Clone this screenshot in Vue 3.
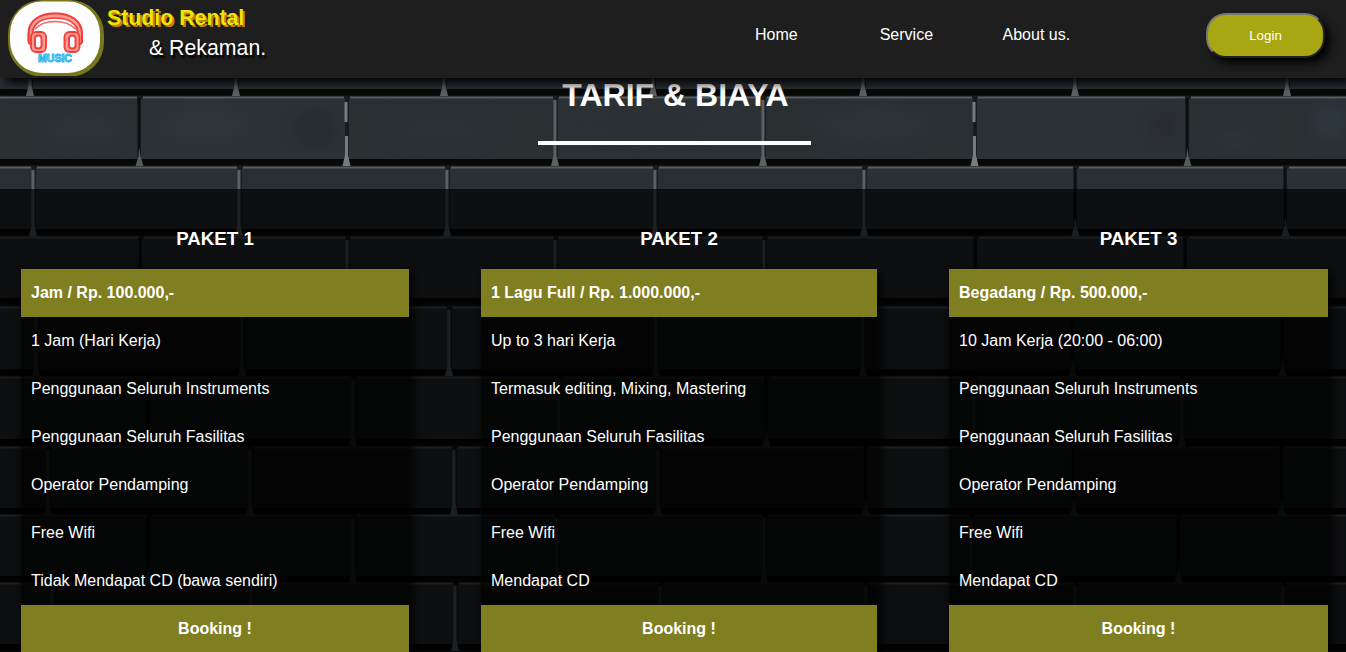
<script setup>
const links = ['Home', 'Service', 'About us.']

const packages = [
  { name: 'PAKET 1', price: 'Jam / Rp. 100.000,-', items: ['1 Jam (Hari Kerja)', 'Penggunaan Seluruh Instruments', 'Penggunaan Seluruh Fasilitas', 'Operator Pendamping', 'Free Wifi', 'Tidak Mendapat CD (bawa sendiri)'] },
  { name: 'PAKET 2', price: '1 Lagu Full / Rp. 1.000.000,-', items: ['Up to 3 hari Kerja', 'Termasuk editing, Mixing, Mastering', 'Penggunaan Seluruh Fasilitas', 'Operator Pendamping', 'Free Wifi', 'Mendapat CD'] },
  { name: 'PAKET 3', price: 'Begadang / Rp. 500.000,-', items: ['10 Jam Kerja (20:00 - 06:00)', 'Penggunaan Seluruh Instruments', 'Penggunaan Seluruh Fasilitas', 'Operator Pendamping', 'Free Wifi', 'Mendapat CD'] }
]

// Brick courses: top edge, bottom edge, and vertical joints as [x, style].
// Styles: 'f' full light joint, 'b' broken light joint, 'd' dark joint lit only at its foot.
const courses = [
  { top: 30, bottom: 90, joints: [[30, 'f'], [236, 'f'], [444, 'f'], [653, 'f'], [863, 'f'], [1075, 'f'], [1287, 'f']] },
  { top: 98, bottom: 160, joints: [[139, 'd'], [346, 'b'], [555, 'f'], [763, 'f'], [974, 'b'], [1187, 'd']] },
  { top: 168, bottom: 230, joints: [[33, 'f'], [239, 'f'], [447, 'f'], [655, 'f'], [864, 'f'], [1075, 'd'], [1285, 'd']] },
  { top: 238, bottom: 299, joints: [[140, 'd'], [347, 'f'], [555, 'f'], [764, 'f'], [975, 'd'], [1185, 'd']] },
  { top: 308, bottom: 370, joints: [[36, 'f'], [242, 'f'], [449, 'f'], [656, 'f'], [863, 'f'], [1072, 'd'], [1282, 'd']] },
  { top: 378, bottom: 440, joints: [[148, 'd'], [353, 'f'], [559, 'f'], [766, 'd'], [974, 'f'], [1182, 'f']] },
  { top: 448, bottom: 509, joints: [[48, 'f'], [250, 'f'], [454, 'f'], [658, 'f'], [865, 'd'], [1073, 'd'], [1281, 'd']] },
  { top: 516, bottom: 577, joints: [[148, 'd'], [353, 'f'], [557, 'f'], [764, 'f'], [971, 'f'], [1178, 'd']] },
  { top: 584, bottom: 645, joints: [[52, 'f'], [251, 'f'], [455, 'f'], [660, 'f'], [866, 'f'], [1075, 'f'], [1283, 'f']] }
]
const fills = ['#2b3034', '#2c3135', '#292e32', '#2a2f32']
const bricks = courses.flatMap((c, r) => {
  const xs = [-60, ...c.joints.map(j => j[0]), 1400]
  return xs.slice(0, -1).map((x, i) => ({
    x: x + 2, y: c.top, w: xs[i + 1] - x - 3, h: c.bottom - c.top,
    fill: fills[(i * 2 + r * 3) % fills.length],
    key: r + '-' + i
  }))
})
const joints = courses.flatMap((c, r) =>
  c.joints.map(([x, kind], i) => ({ x, kind, top: c.top, bottom: c.bottom + 7, key: r + '-' + i }))
)
</script>

<template>
  <div class="page">
    <svg class="wall" width="1346" height="652" viewBox="0 0 1346 652" aria-hidden="true">
      <defs>
        <filter id="soft" x="-5%" y="-5%" width="110%" height="110%" color-interpolation-filters="sRGB"><feGaussianBlur stdDeviation="0.6" /></filter>
        <filter id="smudge" x="-50%" y="-50%" width="200%" height="200%" color-interpolation-filters="sRGB"><feGaussianBlur stdDeviation="8" /></filter>
      </defs>
      <rect width="1346" height="652" fill="#1a1d1f" />
      <g filter="url(#soft)">
        <rect v-for="b in bricks" :key="b.key" :x="b.x" :y="b.y" :width="b.w" :height="b.h" rx="2" :fill="b.fill" />
      </g>
      <g filter="url(#smudge)" opacity=".7">
        <ellipse cx="85" cy="130" rx="40" ry="16" fill="#30353b" />
        <ellipse cx="205" cy="125" rx="45" ry="17" fill="#31363b" />
        <ellipse cx="315" cy="130" rx="20" ry="20" fill="#212c30" />
        <ellipse cx="440" cy="128" rx="55" ry="17" fill="#2d3236" />
        <ellipse cx="650" cy="124" rx="65" ry="15" fill="#2a3135" />
        <ellipse cx="875" cy="125" rx="60" ry="17" fill="#303539" />
        <ellipse cx="1166" cy="125" rx="12" ry="18" fill="#27272b" />
        <ellipse cx="1235" cy="140" rx="28" ry="8" fill="#2c3642" />
        <ellipse cx="1330" cy="122" rx="20" ry="20" fill="#2e3844" />
      </g>
      <g filter="url(#soft)">
        <template v-for="b in bricks" :key="b.key">
          <rect :x="b.x + 2" :y="b.y - 1.500" :width="b.w - 3" height="2" fill="#565d61" />
          <rect :x="b.x" :y="b.y + b.h - 1" :width="b.w" height="6.500" fill="#080907" />
        </template>
        <template v-for="j in joints" :key="j.key">
          <path v-if="j.kind === 'd'" :d="`M${j.x} ${j.top}V${j.bottom - 5}`" stroke="#0c0e0f" stroke-width="3" />
          <path v-else :d="`M${j.x + 2} ${j.top}V${j.bottom - 5}`" stroke="#15181a" stroke-width="1.500" />
          <path v-if="j.kind === 'f'" :d="`M${j.x - 1.500} ${j.top + 2}h3V${j.bottom - 12}l2.500 11h-8l2.500-11z`" fill="#5a6165" />
          <path v-else-if="j.kind === 'b'" :d="`M${j.x - 1.500} ${j.top + 4}h3v20h-3zM${j.x - 1} ${j.top + 38}h3V${j.bottom - 12}l2.500 11h-8l2.500-11z`" fill="#747c82" />
          <path v-else :d="`M${j.x} ${j.bottom - 20}l1.500 9 3 10h-8l3-10z`" fill="#555c60" />
        </template>
      </g>
    </svg>

    <header class="bar">
      <svg class="logo" viewBox="0 0 96 76" aria-label="Music">
        <rect x="0" y="0" width="96" height="76.500" rx="34" fill="#77771b" />
        <rect x="2" y="1.500" width="90" height="71.500" rx="32" fill="#fff" />
        <g fill="none" stroke-linecap="round" stroke-linejoin="round">
          <path d="M22.500 39V34C22.500 22 33 15.500 47 15.500S72 22 72 34V39" stroke="#ff9d94" stroke-width="6" />
          <path d="M20.500 41V34C20.500 20 32 13.500 47 13.500S74 20 74 34V41" stroke="#f53c3a" stroke-width="2" />
          <path d="M24.500 32C26 23 34 18 47 18S68.500 23 70 32" stroke="#f53c3a" stroke-width="1.700" />
          <path d="M27 29Q34 21.500 47 21.500T67.500 29" stroke="#f8655f" stroke-width="1.300" />
          <g stroke="#ff9d94" stroke-width="4">
            <rect x="25" y="34" width="10.500" height="16" rx="4" /><rect x="58.500" y="34" width="10.500" height="16" rx="4" />
          </g>
          <g stroke="#f53c3a" stroke-width="1.900">
            <rect x="23" y="32" width="15" height="20" rx="5" /><rect x="56.500" y="32" width="15" height="20" rx="5" />
            <rect x="27" y="35.500" width="6.500" height="13" rx="3" /><rect x="61" y="35.500" width="6.500" height="13" rx="3" />
            <path d="M20.500 41Q20.500 44 23 44M74 41Q74 44 71.500 44" />
          </g>
        </g>
        <text x="47" y="62.200" text-anchor="middle" textLength="34" lengthAdjust="spacingAndGlyphs" class="logo-text">MUSIC</text>
      </svg>
      <div class="brand">
        <strong>Studio Rental</strong>
        <span>&amp; Rekaman.</span>
      </div>
      <nav class="nav">
        <a v-for="l in links" :key="l">{{ l }}</a>
      </nav>
      <button class="login">Login</button>
    </header>

    <section class="heading">
      <h1>TARIF &amp; BIAYA</h1>
      <div class="rule"></div>
    </section>

    <main class="packages">
      <article v-for="p in packages" :key="p.name">
        <h3>{{ p.name }}</h3>
        <div class="table">
          <div class="row gold">{{ p.price }}</div>
          <div v-for="item in p.items" :key="item" class="row">{{ item }}</div>
          <div class="row gold booking">Booking !</div>
        </div>
      </article>
    </main>
  </div>
</template>

<style>
body {
  margin: 0;
  background: #101112;
}
</style>

<style scoped>
.page {
  position: relative;
  width: 1346px;
  height: 652px;
  overflow: hidden;
  color: #fff;
  font: 16px/18px "Liberation Sans", Arial, sans-serif;
}
.wall {
  position: absolute;
  inset: 0;
}
.bar {
  position: relative;
  z-index: 2;
  display: flex;
  align-items: flex-start;
  box-sizing: border-box;
  height: 78px;
  padding-left: 8px;
  background: #1e1e1e;
  box-shadow: 5px 5px 10px #000;
}
.logo {
  flex: none;
  width: 96px;
  height: 76px;
}
.logo-text {
  font: bold 10px "Liberation Sans", Arial, sans-serif;
  fill: #a5e6fb;
  stroke: #27b1e8;
  stroke-width: 0.9px;
}
.brand {
  display: flex;
  flex-direction: column;
  width: 200px;
  margin-left: 3px;
  padding-top: 3px;
  font-size: 21.3px;
  line-height: 30px;
}
.brand strong {
  color: #eee600;
  text-shadow: 2px 2px 0 #c87f08;
}
.brand span {
  padding-left: 42px;
  text-shadow: 2px 3px 2px #000;
}
.nav {
  display: flex;
  gap: 82px;
  margin-left: 448px;
  padding-top: 26px;
}
.nav a:last-child {
  margin-left: -12.5px;
}
.login {
  box-sizing: border-box;
  width: 119px;
  height: 45px;
  margin: 13px 21px 0 auto;
  border: 2px outset #767676;
  border-radius: 20px;
  background: #a9a613;
  box-shadow: 5px 5px 10px #000;
  color: #fff;
  font: 13.333px "Liberation Sans", Arial, sans-serif;
}
.heading {
  position: relative;
  height: 111px;
  text-align: center;
}
.heading h1 {
  margin: 0;
  padding-left: 5px;
  font-size: 32px;
  line-height: 34px;
}
.rule {
  width: 273px;
  height: 4px;
  margin: 29px 0 0 538px;
  background: #fff;
}
.packages {
  position: relative;
  display: grid;
  grid-template-columns: 388px 396px 379px;
  column-gap: 72px;
  box-sizing: border-box;
  height: 463px;
  padding: 39px 18px 0 21px;
  background: rgba(0, 0, 0, 0.68);
}
h3 {
  margin: 0 0 19px;
  font-size: 18.72px;
  line-height: 22px;
  text-align: center;
}
.table {
  background: rgba(0, 0, 0, 0.65);
  box-shadow: 3px 3px 10px #000;
}
.row {
  box-sizing: border-box;
  height: 48px;
  padding: 15px 10px;
}
.gold {
  background: rgba(153, 151, 38, 0.83);
  font-weight: bold;
}
.booking {
  text-align: center;
}
</style>
